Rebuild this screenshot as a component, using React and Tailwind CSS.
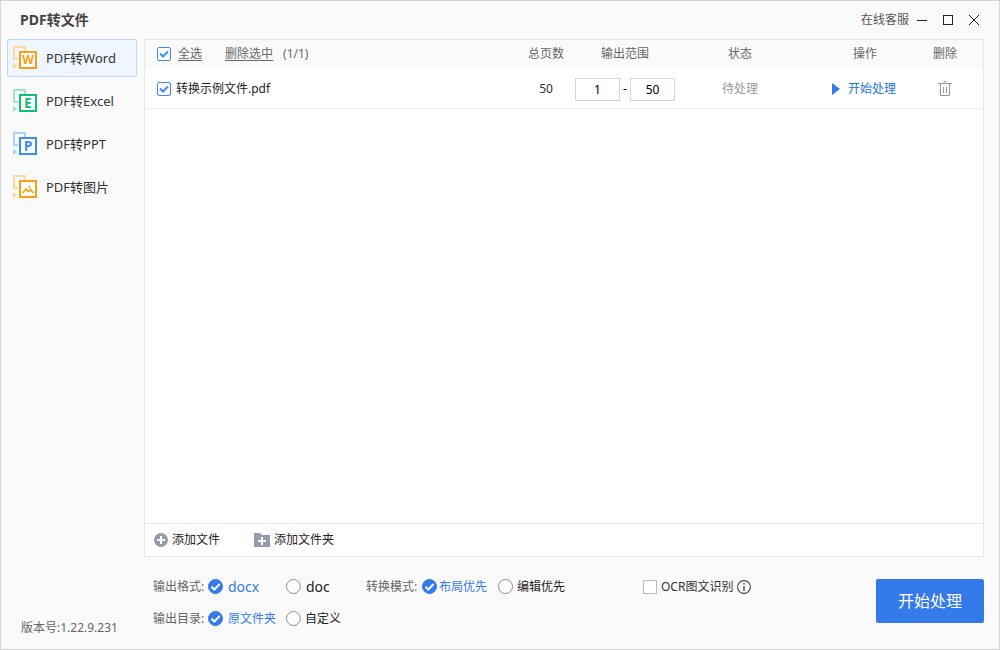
import React, { useState } from "react";

function FormatIcon({ color, light, letter }) {
  return (
    <svg width="24" height="24" viewBox="0 0 24 24" fill="none" className="shrink-0" aria-hidden="true">
      <path d="M5 13H1V1H12V5" stroke={light} strokeWidth="2" />
      <path d="M0 17L4.5 20L0 23Z" fill={light} />
      <rect x="7" y="6" width="16" height="16" fill="#fff" stroke={color} strokeWidth="2" />
      {letter ? (
        <text
          x="15"
          y={letter === "W" ? 18 : 19}
          textAnchor="middle"
          fontSize={letter === "W" ? 12 : 14}
          fontWeight="700"
          fontFamily="Noto Sans, sans-serif"
          fill={color}
        >
          {letter}
        </text>
      ) : (
        <>
          <path d="M9.5 18L13 14L15.5 16.5L17.5 14.5L20.5 18" stroke={color} strokeWidth="1.6" />
          <circle cx="16.5" cy="11.8" r="1" fill={color} />
        </>
      )}
    </svg>
  );
}

const formats = [
  { id: "word", label: "PDF转Word", letter: "W", color: "#fb9f10", light: "#fdd9a0" },
  { id: "excel", label: "PDF转Excel", letter: "E", color: "#0dbf78", light: "#9fe5c9" },
  { id: "ppt", label: "PDF转PPT", letter: "P", color: "#3a8ff5", light: "#aad2fb" },
  { id: "image", label: "PDF转图片", letter: null, color: "#fb9f10", light: "#fdd9a0" },
];

function Checkbox({ id, label, checked, onChange }) {
  return (
    <span className="grid size-3.5 shrink-0">
      <input
        id={id}
        type="checkbox"
        aria-label={label}
        checked={checked}
        onChange={(e) => onChange(e.target.checked)}
        className="peer col-start-1 row-start-1 size-3.5 appearance-none border border-[#bbb] bg-white checked:rounded-xs checked:border-[#3b8cf5]"
      />
      <svg
        viewBox="0 0 14 14"
        fill="none"
        aria-hidden="true"
        className="pointer-events-none invisible col-start-1 row-start-1 size-3.5 peer-checked:visible"
      >
        <path d="M3 6.5L6 9.5L11 4.5" stroke="#3b8cf5" strokeWidth="2" />
      </svg>
    </span>
  );
}

function Radio({ name, value, selected, onSelect, className, children }) {
  return (
    <label className={`flex items-center whitespace-nowrap ${className}`}>
      <span className="grid size-[15px] shrink-0">
        <input
          type="radio"
          name={name}
          value={value}
          checked={selected === value}
          onChange={() => onSelect(value)}
          className="peer col-start-1 row-start-1 size-[15px] appearance-none rounded-full border border-[#8c8c8c] bg-white checked:border-[#347aeb] checked:bg-[#347aeb]"
        />
        <svg
          viewBox="0 0 15 15"
          fill="none"
          aria-hidden="true"
          className="pointer-events-none invisible col-start-1 row-start-1 size-[15px] peer-checked:visible"
        >
          <path d="M3.5 7.8L6.3 10.5L11.6 5" stroke="#fff" strokeWidth="2" />
        </svg>
      </span>
      <span className={selected === value ? "text-[#347aeb]" : "text-[#222]"}>{children}</span>
    </label>
  );
}

function TitleBar() {
  return (
    <header className="flex h-[38px] shrink-0 items-center justify-between pr-5 pl-[19px]">
      <h1 className="text-sm font-bold text-[#444]">PDF转文件</h1>
      <div className="flex items-center">
        <a href="#support" className="mr-2 text-[#555]">在线客服</a>
        <div className="flex items-center gap-4">
          <button type="button" aria-label="最小化" className="size-2.5">
            <svg width="10" height="10" viewBox="0 0 10 10" aria-hidden="true">
              <path d="M0 5.5H10" stroke="#222" />
            </svg>
          </button>
          <button type="button" aria-label="最大化" className="size-2.5">
            <svg width="10" height="10" viewBox="0 0 10 10" fill="none" aria-hidden="true">
              <rect x="0.5" y="0.5" width="9" height="9" stroke="#222" />
            </svg>
          </button>
          <button type="button" aria-label="关闭" className="size-2.5">
            <svg width="10" height="10" viewBox="0 0 10 10" aria-hidden="true">
              <path d="M0 0L10 10M10 0L0 10" stroke="#222" />
            </svg>
          </button>
        </div>
      </div>
    </header>
  );
}

function Sidebar() {
  const [active, setActive] = useState("word");
  return (
    <aside className="flex w-[143px] shrink-0 flex-col justify-between pr-[7px] pl-1.5">
      <nav className="flex flex-col gap-[5px]">
        {formats.map((f) => (
          <button
            key={f.id}
            type="button"
            onClick={() => setActive(f.id)}
            className={`flex h-[38px] items-center gap-[9px] rounded-xs border pl-[5px] text-[13px] text-[#333] ${
              active === f.id ? "border-[#bddafb] bg-[#eff6ff]" : "border-transparent"
            }`}
          >
            <FormatIcon color={f.color} light={f.light} letter={f.letter} />
            <span className="pt-0.5">{f.label}</span>
          </button>
        ))}
      </nav>
      <p className="pb-[13px] pl-3.5 text-[#666]">版本号:1.22.9.231</p>
    </aside>
  );
}

function FileTable() {
  const [checked, setChecked] = useState(true);
  const [from, setFrom] = useState("1");
  const [to, setTo] = useState("50");
  const field = "h-[23px] w-[45px] border border-[#d5d5d5] bg-white text-center text-black";
  return (
    <table className="w-full table-fixed border-separate border-spacing-0">
      <colgroup>
        <col />
        <col className="w-[58px]" />
        <col className="w-[100px]" />
        <col className="w-[130px]" />
        <col className="w-[120px]" />
        <col className="w-[58px]" />
      </colgroup>
      <thead>
        <tr className="h-[29px] bg-[#fafafa] text-[#666] *:p-0 *:pb-0.5 *:font-normal">
          <th>
            <div className="flex items-center pl-3">
              <Checkbox id="all" label="全选" checked={checked} onChange={setChecked} />
              <label htmlFor="all" className="ml-[7px] underline underline-offset-2">全选</label>
              <button type="button" className="ml-[23px] underline underline-offset-2">删除选中</button>
              <span className="ml-2.5">(1/1)</span>
            </div>
          </th>
          <th>总页数</th>
          <th>输出范围</th>
          <th>状态</th>
          <th>操作</th>
          <th>
            <div className="pr-[18px]">删除</div>
          </th>
        </tr>
      </thead>
      <tbody>
        <tr className="h-10 text-center *:border-b *:border-[#f0f0f0] *:p-0">
          <td>
            <div className="flex items-center gap-[5px] pl-3">
              <Checkbox id="file" checked={checked} onChange={setChecked} />
              <label htmlFor="file" className="text-[#222]">转换示例文件.pdf</label>
            </div>
          </td>
          <td className="text-[#333]">50</td>
          <td>
            <div className="flex items-center justify-between pt-px text-black">
              <input aria-label="起始页" value={from} onChange={(e) => setFrom(e.target.value)} className={field} />
              -
              <input aria-label="结束页" value={to} onChange={(e) => setTo(e.target.value)} className={field} />
            </div>
          </td>
          <td className="text-[#999]">待处理</td>
          <td>
            <button type="button" className="inline-flex items-center gap-2 pr-0.5 align-middle text-[#1a74e0]">
              <svg width="8" height="12" viewBox="0 0 8 12" aria-hidden="true">
                <path d="M0 0L8 6L0 12Z" fill="#347aeb" />
              </svg>
              开始处理
            </button>
          </td>
          <td>
            <button type="button" aria-label="删除文件" className="block w-full pr-[18px]">
              <svg width="14" height="16" viewBox="0 0 14 16" fill="none" stroke="#999" className="mx-auto" aria-hidden="true">
                <path d="M0 2.5H14M6 1.5V0.5H8V1.5M2.5 3V14.5H11.5V3M5.5 6V12M8.5 6V12" />
              </svg>
            </button>
          </td>
        </tr>
      </tbody>
    </table>
  );
}

function AddBar() {
  return (
    <div className="flex h-[33px] items-center gap-[34px] border-t border-[#e8e8e8] pl-[9px] text-[#222]">
      <button type="button" className="flex items-center gap-1">
        <svg width="14" height="14" viewBox="0 0 14 14" aria-hidden="true">
          <circle cx="7" cy="7" r="7" fill="#959bae" />
          <path d="M7 3V11M3 7H11" stroke="#fff" strokeWidth="2" />
        </svg>
        添加文件
      </button>
      <button type="button" className="flex items-center gap-1">
        <svg width="16" height="14" viewBox="0 0 16 14" aria-hidden="true">
          <path d="M0 0H6L8 2H16V14H0Z" fill="#959bae" />
          <path d="M8 4V12M4 8H12" stroke="#fff" strokeWidth="2" />
        </svg>
        添加文件夹
      </button>
    </div>
  );
}

function Settings() {
  const [format, setFormat] = useState("docx");
  const [mode, setMode] = useState("layout");
  const [dir, setDir] = useState("source");
  const [ocr, setOcr] = useState(false);
  return (
    <footer className="flex items-center pt-3.5 pb-3.5 pl-[9px]">
      <div className="flex flex-1 flex-col gap-px pb-px">
        <div className="flex h-[31px] items-center">
          <div role="radiogroup" aria-labelledby="format-label" className="flex w-[213px] items-center">
            <span id="format-label" className="w-[55px] text-[#666]">输出格式:</span>
            <Radio name="format" value="docx" selected={format} onSelect={setFormat} className="w-[78px] gap-[5px] text-sm">docx</Radio>
            <Radio name="format" value="doc" selected={format} onSelect={setFormat} className="gap-[5px] text-sm">doc</Radio>
          </div>
          <div role="radiogroup" aria-labelledby="mode-label" className="flex w-[277px] items-center">
            <span id="mode-label" className="w-14 text-[#666]">转换模式:</span>
            <Radio name="mode" value="layout" selected={mode} onSelect={setMode} className="w-[76px] gap-0.5">布局优先</Radio>
            <Radio name="mode" value="edit" selected={mode} onSelect={setMode} className="gap-1">编辑优先</Radio>
          </div>
          <div className="flex items-center gap-1">
            <Checkbox id="ocr" checked={ocr} onChange={setOcr} />
            <label htmlFor="ocr" className="text-[#333]">OCR图文识别</label>
            <button type="button" aria-label="识别说明">
              <svg width="14" height="14" viewBox="0 0 14 14" fill="none" aria-hidden="true">
                <circle cx="7" cy="7" r="6.4" stroke="#444" strokeWidth="1.1" />
                <path d="M7 6V11M7 3V4.5" stroke="#555" strokeWidth="1.5" />
              </svg>
            </button>
          </div>
        </div>
        <div role="radiogroup" aria-labelledby="dir-label" className="flex h-[31px] items-center">
          <span id="dir-label" className="w-[55px] text-[#666]">输出目录:</span>
          <Radio name="dir" value="source" selected={dir} onSelect={setDir} className="w-[78px] gap-[5px]">原文件夹</Radio>
          <Radio name="dir" value="custom" selected={dir} onSelect={setDir} className="gap-1">自定义</Radio>
        </div>
      </div>
      <button type="button" className="mb-1 h-11 w-[108px] rounded-xs bg-[#347aeb] text-base text-white">开始处理</button>
    </footer>
  );
}

export default function App() {
  return (
    <div className="flex min-h-screen flex-col border border-[#d2d2d2] bg-[#fafafa] font-['Noto_Sans','Noto_Sans_CJK_SC',sans-serif] text-xs">
      <TitleBar />
      <div className="flex flex-1">
        <Sidebar />
        <main className="flex min-w-0 flex-1 flex-col pr-[15px]">
          <section className="flex flex-1 flex-col justify-between border border-[#e8e8e8] bg-white">
            <FileTable />
            <AddBar />
          </section>
          <Settings />
        </main>
      </div>
    </div>
  );
}
